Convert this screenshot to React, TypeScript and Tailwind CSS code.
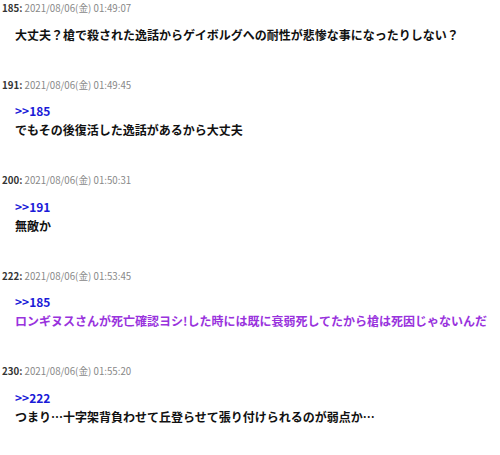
const posts = [
  {
    no: 185,
    date: "2021/08/06(金) 01:49:07",
    anchor: "",
    body: "大丈夫？槍で殺された逸話からゲイボルグへの耐性が悲惨な事になったりしない？",
    purple: false,
  },
  {
    no: 191,
    date: "2021/08/06(金) 01:49:45",
    anchor: ">>185",
    body: "でもその後復活した逸話があるから大丈夫",
    purple: false,
  },
  {
    no: 200,
    date: "2021/08/06(金) 01:50:31",
    anchor: ">>191",
    body: "無敵か",
    purple: false,
  },
  {
    no: 222,
    date: "2021/08/06(金) 01:53:45",
    anchor: ">>185",
    body: "ロンギヌスさんが死亡確認ヨシ!した時には既に衰弱死してたから槍は死因じゃないんだ",
    purple: true,
  },
  {
    no: 230,
    date: "2021/08/06(金) 01:55:20",
    anchor: ">>222",
    body: "つまり…十字架背負わせて丘登らせて張り付けられるのが弱点か…",
    purple: false,
  },
];

export default function App() {
  return (
    <main className="w-[500px] h-[455px] overflow-hidden bg-white font-['Noto_Sans_CJK_JP',sans-serif]">
      {posts.map((p) => (
        <article key={p.no} className="pb-[33px]">
          <div className="h-[17px] pl-[2px] text-[9.7px] leading-[17px] whitespace-nowrap">
            <span className="font-bold text-[#333]">{p.no}: </span>
            <span className="text-[#888]">{p.date}</span>
          </div>
          <div className="mt-[7.5px] pl-[15px] text-[12px] leading-[19px] font-bold whitespace-nowrap">
            {p.anchor && <div className="text-[#1a1ad8]">{p.anchor}</div>}
            <div className={p.purple ? "text-[#9933dd]" : "text-[#111]"}>{p.body}</div>
          </div>
        </article>
      ))}
    </main>
  );
}
